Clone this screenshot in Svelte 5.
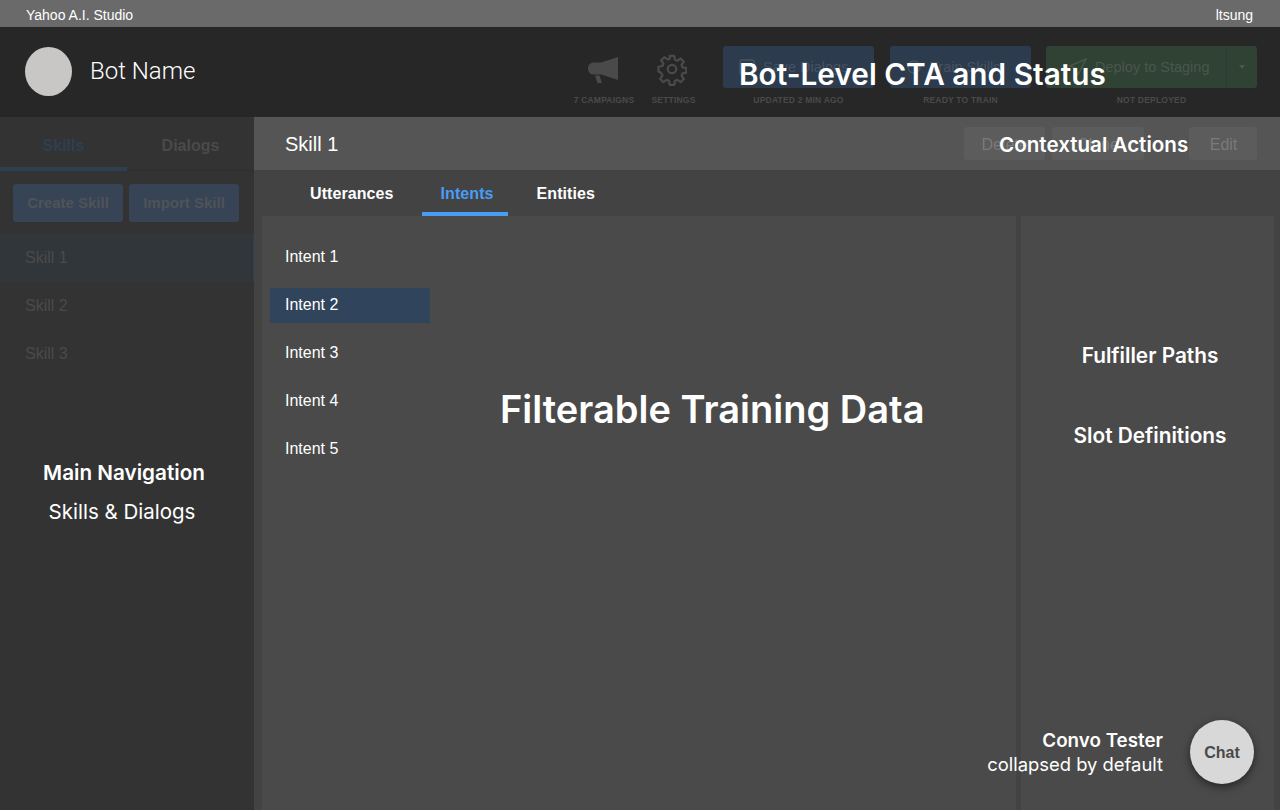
<script>
  const skills = ['Skill 1', 'Skill 2', 'Skill 3'];
  const intents = ['Intent 1', 'Intent 2', 'Intent 3', 'Intent 4', 'Intent 5'];
</script>

<div class="page">
  <div class="topbar"><span>Yahoo A.I. Studio</span><span class="user">ltsung</span></div>

  <header class="header">
    <div class="avatar"></div>
    <div class="botname">Bot Name</div>
    <div class="tools">
      <div class="tool t1">
        <svg width="32" height="28" viewBox="0 0 32 28"><path fill="#4a4a4a" d="M31 1v23L14 18.500H6.500A5.500 5.500 0 0 1 1 13v-1a5.500 5.500 0 0 1 5.500-5.500H14z"/><path fill="#4a4a4a" d="M8 19.500h4.500l2.500 7.500h-4.500z"/></svg>
        <span class="cap">7 CAMPAIGNS</span>
      </div>
      <div class="tool t2">
        <svg width="30" height="30" viewBox="0 0 32 32" fill="none" stroke="#4a4a4a" stroke-width="2.400" stroke-linejoin="round"><circle cx="16" cy="16" r="4.500"/><path d="M13.600 2h4.800l.8 4.200 2.500 1 3.500-2.400 3.400 3.400-2.400 3.500 1 2.500 4.200.8v4.800l-4.200.8-1 2.500 2.400 3.500-3.400 3.400-3.500-2.400-2.500 1-.8 4.200h-4.800l-.8-4.200-2.500-1-3.500 2.400-3.400-3.400 2.400-3.500-1-2.500L1.600 18.400v-4.800l4.200-.8 1-2.500-2.400-3.500 3.400-3.400 3.500 2.400 2.500-1z"/></svg>
        <span class="cap">SETTINGS</span>
      </div>
      <div class="cta c1">
        <div class="btn blue w1">
          <svg width="16" height="16" viewBox="0 0 16 16" fill="none" stroke="#465261" stroke-width="1.500"><rect x="1" y="1" width="14" height="14" rx="2"/></svg>
          <span>Save Dialogs</span>
        </div>
        <span class="cap">UPDATED 2 MIN AGO</span>
      </div>
      <div class="cta c2">
        <div class="btn blue w2">
          <svg width="16" height="16" viewBox="0 0 16 16" fill="none" stroke="#465261" stroke-width="1.500"><circle cx="8" cy="8" r="6"/></svg>
          <span>Train Skills</span>
        </div>
        <span class="cap">READY TO TRAIN</span>
      </div>
      <div class="cta c3">
        <div class="split">
          <div class="btn green w3">
            <svg width="18" height="18" viewBox="0 0 16 16" fill="none" stroke="#4a574b" stroke-width="1.200"><path d="M15 1 1 7l5 2 2 6z"/></svg>
            <span>Deploy to Staging</span>
          </div>
          <div class="btn green caret"><i></i></div>
        </div>
        <span class="cap">NOT DEPLOYED</span>
      </div>
    </div>
  </header>

  <div class="body">
    <aside class="side">
      <div class="sidetabs">
        <div class="stab on">Skills</div>
        <div class="stab">Dialogs</div>
      </div>
      <div class="sidebtns">
        <div class="sbtn">Create Skill</div>
        <div class="sbtn">Import Skill</div>
      </div>
      <ul class="skills">
        {#each skills as s, i}
          <li class:sel={i === 0}>{s}</li>
        {/each}
      </ul>
      <div class="note-nav">
        <strong>Main Navigation</strong>
        <span class="nav-sub">Skills &amp; Dialogs</span>
      </div>
    </aside>

    <main class="main">
      <div class="mainhead">
        <div class="title">Skill 1</div>
        <div class="actions">
          <div class="abtn a1">Delete</div>
          <div class="abtn a2">Clone</div>
          <div class="abtn a3">Edit</div>
        </div>
      </div>
      <nav class="tabs">
        <div class="tab">Utterances</div>
        <div class="tab on">Intents</div>
        <div class="tab">Entities</div>
      </nav>
      <div class="panels">
        <section class="center">
          <ul class="intents">
            {#each intents as s, i}
              <li class:sel={i === 1}>{s}</li>
            {/each}
          </ul>
          <div class="bigtitle">Filterable Training Data</div>
        </section>
        <section class="right">
          <div class="rlabel first">Fulfiller Paths</div>
          <div class="rlabel">Slot Definitions</div>
        </section>
      </div>
    </main>
  </div>

  <div class="ov-cta">Bot-Level CTA and Status</div>
  <div class="ov-ctx">Contextual Actions</div>
  <div class="ov-convo"><strong>Convo Tester</strong><span>collapsed by default</span></div>
  <div class="chat">Chat</div>
</div>

<style>
  :global(body) { margin: 0; background: #444; }
  ul { list-style: none; margin: 0; padding: 0; }
  .page {
    position: relative;
    width: 1280px;
    height: 810px;
    overflow: hidden;
    display: flex;
    flex-direction: column;
    font-family: "Liberation Sans", Arial, sans-serif;
  }
  .topbar {
    height: 27px;
    flex: none;
    box-sizing: border-box;
    padding: 3px 27px 0 26px;
    display: flex;
    justify-content: space-between;
    align-items: center;
    background: #6a6a6a;
    color: #fff;
    font-size: 14px;
  }
  .header {
    height: 90px;
    flex: none;
    background: #272727;
    display: flex;
    align-items: center;
    padding-left: 25px;
    box-sizing: border-box;
  }
  .avatar {
    width: 47px;
    height: 49px;
    margin-bottom: 2px;
    border-radius: 50%;
    background: #c8c7c5;
  }
  .botname {
    margin-left: 18px;
    margin-bottom: 2px;
    color: #fff;
    font: 300 24px Roboto, sans-serif;
  }
  .tools {
    margin-left: auto;
    display: flex;
    height: 90px;
    padding-top: 19px;
    box-sizing: border-box;
    padding-right: 23px;
  }
  .tool, .cta { display: flex; flex-direction: column; align-items: center; }
  .tool svg { height: 42px; }
  .t1 { width: 62px; margin-right: 12px; }
  .t2 { width: 53px; margin-right: 23px; }
  .t1 svg { transform: translate(-1px, 3px); }
  .t2 svg { transform: translate(-2px, 2px); }
  .cap {
    margin-top: 6px;
    font-size: 8.500px;
    line-height: 12px;
    font-weight: 700;
    letter-spacing: .2px;
    color: #4a4a4a;
    white-space: nowrap;
  }
  .btn {
    height: 42px;
    display: flex;
    align-items: center;
    gap: 8px;
    box-sizing: border-box;
    font-size: 14.500px;
    padding-left: 16px;
  }
  .blue { background: #2c3c4e; color: #465261; border-radius: 3px; }
  .green { background: #304234; color: #4a574b; }
  .w1 { width: 151px; }
  .w2 { width: 141px; }
  .c1 { margin-right: 16px; }
  .c2 { margin-right: 15px; }
  .split { display: flex; }
  .w3 { width: 181px; border-radius: 3px 0 0 3px; border-right: 1px solid #2a3a2e; padding-left: 23px; }
  .caret { width: 30px; padding: 0; justify-content: center; border-radius: 0 3px 3px 0; }
  .caret i {
    width: 0; height: 0;
    border-left: 3.500px solid transparent;
    border-right: 3.500px solid transparent;
    border-top: 4px solid #4a574b;
  }
  .body { flex: 1; display: flex; min-height: 0; }
  .side {
    position: relative;
    width: 254px;
    flex: none;
    background: #333;
  }
  .sidetabs { display: flex; height: 54px; border-bottom: 1px solid #2f2f2f; box-sizing: border-box; }
  .stab {
    flex: 1;
    text-align: center;
    font-size: 16px;
    font-weight: 700;
    line-height: 57px;
    color: #4a4a4a;
    box-sizing: border-box;
  }
  .stab.on { color: #2f3f52; border-bottom: 4px solid #2f3f52; height: 54px; }
  .sidebtns { display: flex; gap: 6px; padding: 13px 0 0 13px; }
  .sbtn {
    width: 110px;
    height: 38px;
    border-radius: 3px;
    background: #364456;
    color: #4f5358;
    font-size: 15px;
    font-weight: 700;
    line-height: 38px;
    text-align: center;
  }
  .skills { margin-top: 12px; }
  .skills li {
    height: 48px;
    line-height: 48px;
    padding-left: 25px;
    font-size: 16px;
    color: #4a4a4a;
  }
  .skills li.sel { background: #31363b; border-right: 1px solid #2f3f52; }
  .note-nav {
    position: absolute;
    left: 0;
    top: 344px;
    width: 248px;
    display: flex;
    flex-direction: column;
    align-items: center;
    gap: 17px;
    color: #fff;
    font-family: Inter, sans-serif;
    font-size: 20.700px;
    line-height: 23px;
  }
  .note-nav strong { font-weight: 600; }
  .nav-sub { font-size: 20.500px; margin-right: 4px; margin-top: -1px; }
  .main { flex: 1; background: #434343; display: flex; flex-direction: column; min-width: 0; }
  .mainhead {
    height: 53px;
    flex: none;
    background: #555;
    display: flex;
    align-items: center;
    padding-left: 31px;
    padding-right: 23px;
    box-sizing: border-box;
  }
  .title { color: #fff; font-size: 20px; padding-top: 2px; }
  .actions { margin-left: auto; display: flex; align-items: center; }
  .abtn {
    height: 33px;
    line-height: 35px;
    border-radius: 3px;
    background: #5c5c5c;
    color: #7a7a7a;
    font-size: 16px;
    text-align: center;
    box-sizing: border-box;
  }
  .a1 { width: 81px; margin-right: 7px; }
  .a2 { width: 92px; margin-right: 45px; }
  .a3 { width: 68px; padding-left: 1px; }
  .tabs { height: 46px; flex: none; display: flex; padding-left: 38px; box-sizing: border-box; }
  .tab {
    padding: 0 18px;
    color: #fff;
    font-size: 16px;
    font-weight: 700;
    letter-spacing: .08px;
    line-height: 48px;
    height: 46px;
    box-sizing: border-box;
  }
  .tab.on { color: #4a9df5; border-bottom: 4px solid #4a9df5; margin: 0 11px 0 10px; padding: 0 14px 0 19px; }
  .panels { flex: 1; display: flex; padding-left: 8px; padding-right: 6px; gap: 5px; min-height: 0; }
  .center { width: 754px; background: #4a4a4a; display: flex; position: relative; }
  .right { flex: 1; background: #4a4a4a; display: flex; flex-direction: column; align-items: center; padding-left: 5px; }
  .intents { padding: 24px 0 0 8px; width: 160px; flex: none; }
  .intents li {
    height: 35px;
    line-height: 33px;
    padding-left: 15px;
    margin-bottom: 13px;
    color: #fff;
    font-size: 16px;
  }
  .intents li.sel { background: #30455c; }
  .bigtitle {
    position: absolute;
    left: 238px;
    top: 169px;
    color: #fff;
    font: 600 38px/48px Inter, sans-serif;
    white-space: nowrap;
  }
  .rlabel {
    color: #fff;
    font: 600 20.800px/24px Inter, sans-serif;
    white-space: nowrap;
  }
  .first { margin-top: 128px; margin-bottom: 56px; }
  .ov-cta {
    position: absolute;
    left: 739px;
    top: 54px;
    color: #fff;
    font: 600 29.750px/40px Inter, sans-serif;
    white-space: nowrap;
  }
  .ov-ctx {
    position: absolute;
    left: 999px;
    top: 132px;
    color: #fff;
    font: 600 20.600px/26px Inter, sans-serif;
    white-space: nowrap;
  }
  .ov-convo {
    position: absolute;
    right: 117px;
    top: 727px;
    display: flex;
    flex-direction: column;
    align-items: flex-end;
    color: #fff;
    font: 400 18.400px/25px Inter, sans-serif;
  }
  .ov-convo strong { font-weight: 600; font-size: 18.800px; padding-top: 1px; margin-bottom: -1px; }
  .chat {
    position: absolute;
    left: 1190px;
    top: 720px;
    width: 64px;
    height: 64px;
    border-radius: 50%;
    background: #d8d8d8;
    color: #4a4a4a;
    font-size: 16px;
    font-weight: 700;
    line-height: 66px;
    text-align: center;
    box-shadow: 0 3px 8px rgba(0,0,0,.5);
  }
</style>
